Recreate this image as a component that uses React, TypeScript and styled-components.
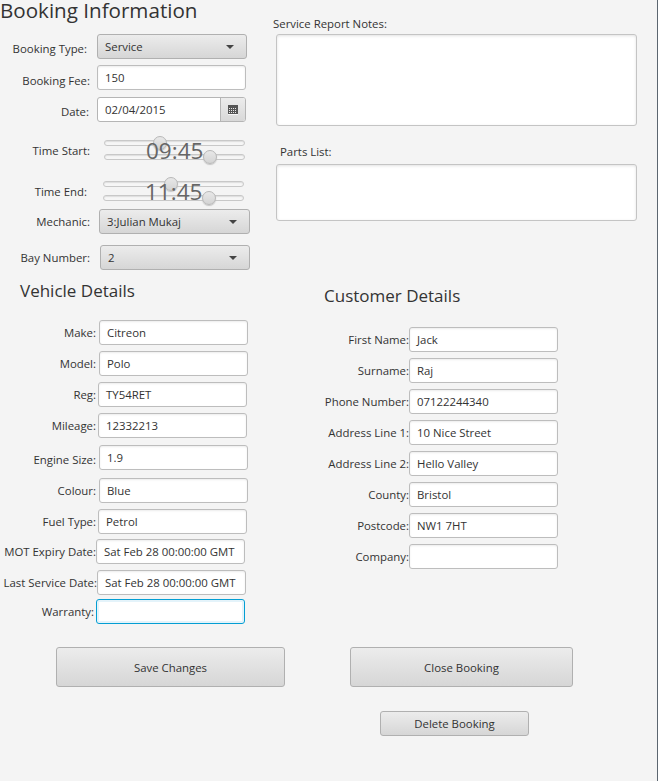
import { createGlobalStyle } from "styled-components";
import styled from "styled-components";

const GlobalStyle = createGlobalStyle`
  html, body {
    margin: 0;
    padding: 0;
    background: #f4f4f4;
  }
  body {
    font-family: "Open Sans", "Noto Sans", sans-serif;
    color: #333;
  }
`;

const Page = styled.div`
  width: 658px;
  height: 781px;
  box-sizing: border-box;
  border-right: 1px solid #5c6670;
  background: #f4f4f4;
  overflow: hidden;
`;

const Columns = styled.div`
  display: flex;
  height: 647px;
`;

const LeftColumn = styled.div`
  width: 273px;
  flex: none;
`;

const RightColumn = styled.div`
  flex: 1;
`;

const MainTitle = styled.h1`
  margin: 0;
  height: 20px;
  line-height: 20px;
  font-size: 20.6px;
  font-weight: 400;
  color: #333;
`;

const SectionTitle = styled.h2<{ $top: number; $left: number }>`
  margin: ${(p) => p.$top}px 0 0 ${(p) => p.$left}px;
  height: 24px;
  line-height: 24px;
  font-size: 17px;
  font-weight: 400;
  color: #333;
`;

const Row = styled.div<{ $top: number }>`
  display: flex;
  align-items: center;
  height: 25px;
  margin-top: ${(p) => p.$top}px;
`;

const Label = styled.label<{ $width: number; $gap: number; $drop?: number }>`
  width: ${(p) => p.$width}px;
  margin-right: ${(p) => p.$gap}px;
  padding-top: ${(p) => (p.$drop ?? 0) * 2}px;
  flex: none;
  text-align: right;
  font-size: 11.4px;
  white-space: nowrap;
  color: #333;
`;

const Input = styled.div<{ $width: number; $focused?: boolean }>`
  width: ${(p) => p.$width}px;
  height: 25px;
  box-sizing: border-box;
  padding: 0 7px;
  line-height: 23px;
  font-size: 11.4px;
  white-space: nowrap;
  overflow: hidden;
  background: #fff;
  border: 1px solid ${(p) => (p.$focused ? "#039ed3" : "#bdbdbd")};
  border-radius: 3px;
  box-shadow: ${(p) =>
    p.$focused ? "inset 0 0 0 2px #e4f3fa" : "inset 0 1px 2px #ececec"};
  color: #333;
`;

const Select = styled.div<{ $width: number }>`
  width: ${(p) => p.$width}px;
  height: 25px;
  box-sizing: border-box;
  padding: 0 12px 0 7px;
  display: flex;
  align-items: center;
  justify-content: space-between;
  font-size: 11.4px;
  background: linear-gradient(#ececec, #d6d6d6);
  border: 1px solid #b0b0b0;
  border-radius: 3px;
  color: #333;
`;

const Arrow = styled.span`
  width: 0;
  height: 0;
  border-left: 4px solid transparent;
  border-right: 4px solid transparent;
  border-top: 4px solid #444;
`;

const DateField = styled.div`
  width: 149px;
  height: 25px;
  box-sizing: border-box;
  display: flex;
  background: #fff;
  border: 1px solid #b5b5b5;
  border-radius: 3px;
  overflow: hidden;
  font-size: 11.4px;
  line-height: 23px;
`;

const DateText = styled.span`
  flex: 1;
  padding: 0 7px;
`;

const DateButton = styled.span`
  width: 24px;
  display: flex;
  align-items: center;
  justify-content: center;
  background: linear-gradient(#ececec, #d8d8d8);
  border-left: 1px solid #b5b5b5;
`;

const TimeRow = styled.div<{ $top: number }>`
  display: flex;
  align-items: center;
  margin-top: ${(p) => p.$top}px;
`;

const TimeControl = styled.div<{ $left: number }>`
  position: relative;
  width: 141px;
  margin-left: ${(p) => p.$left}px;
  display: flex;
  flex-direction: column;
  gap: 8px;
`;

const Track = styled.div`
  position: relative;
  height: 6px;
  box-sizing: border-box;
  background: #f6f6f6;
  border: 1px solid #c8c8c8;
  border-radius: 3px;
  box-shadow: inset 0 1px 1px #dedede;
`;

const Thumb = styled.span<{ $at: number }>`
  position: absolute;
  top: -5px;
  left: ${(p) => p.$at}px;
  width: 14px;
  height: 14px;
  box-sizing: border-box;
  border-radius: 50%;
  background: linear-gradient(#e8e8e8, #d4d4d4);
  border: 1px solid #b8b8b8;
  box-shadow: 0 1px 1px #c4c4c4;
`;

const Clock = styled.span`
  position: absolute;
  top: -1px;
  left: 42px;
  font-size: 22.5px;
  line-height: 24px;
  color: #666;
`;

const NoteLabel = styled.div<{ $top: number; $left: number }>`
  margin: ${(p) => p.$top}px 0 0 ${(p) => p.$left}px;
  height: 16px;
  line-height: 16px;
  font-size: 11.4px;
  color: #333;
`;

const NoteArea = styled.div<{ $height: number; $top: number }>`
  width: 361px;
  height: ${(p) => p.$height}px;
  margin: ${(p) => p.$top}px 0 0 3px;
  box-sizing: border-box;
  background: #fff;
  border: 1px solid #c4c4c4;
  border-radius: 3px;
  box-shadow: inset 0 1px 3px #e2e2e2;
`;

const CustomerFields = styled.div`
  display: flex;
  flex-direction: column;
  gap: 6px;
  margin-top: 19px;
`;

const ActionButton = styled.button<{ $width: number; $height: number }>`
  width: ${(p) => p.$width}px;
  height: ${(p) => p.$height}px;
  padding: 0;
  font-family: inherit;
  font-size: 11.4px;
  color: #333;
  background: linear-gradient(#ececec, #d6d6d6);
  border: 1px solid #b0b0b0;
  border-radius: 3px;
`;

const ButtonRow = styled.div`
  display: flex;
  align-items: flex-start;
  padding-left: 56px;
  gap: 65px;
`;

const DeleteRow = styled.div`
  padding-left: 380px;
  margin-top: 24px;
`;

const vehicle = [
  { label: "Make:", value: "Citreon", top: 17, width: 96, gap: 3 },
  { label: "Model:", value: "Polo", top: 6, width: 96, gap: 3 },
  { label: "Reg:", value: "TY54RET", top: 6, width: 96, gap: 2 },
  { label: "Mileage:", value: "12332213", top: 6, width: 96, gap: 2 },
  { label: "Engine Size:", value: "1.9", top: 7, width: 96, gap: 3, drop: 2 },
  { label: "Colour:", value: "Blue", top: 8, width: 96, gap: 3 },
  { label: "Fuel Type:", value: "Petrol", top: 6, width: 96, gap: 2 },
  { label: "MOT Expiry Date:", value: "Sat Feb 28 00:00:00 GMT", top: 5, width: 96, gap: 0 },
  { label: "Last Service Date:", value: "Sat Feb 28 00:00:00 GMT", top: 6, width: 97, gap: 0 },
  { label: "Warranty:", value: "", top: 4, width: 94, gap: 2, focused: true },
];

const customer = [
  { label: "First Name:", value: "Jack" },
  { label: "Surname:", value: "Raj" },
  { label: "Phone Number:", value: "07122244340" },
  { label: "Address Line 1:", value: "10 Nice Street" },
  { label: "Address Line 2:", value: "Hello Valley" },
  { label: "County:", value: "Bristol" },
  { label: "Postcode:", value: "NW1 7HT" },
  { label: "Company:", value: "" },
];

function CalendarIcon() {
  return (
    <svg width="10" height="10" viewBox="0 0 10 10">
      <rect x="0" y="0" width="10" height="9" fill="#555" />
      <path
        d="M1 3h1v1H1zM3 3h1v1H3zM5 3h1v1H5zM7 3h1v1H7zM1 5h1v1H1zM3 5h1v1H3zM5 5h1v1H5zM7 5h1v1H7zM1 7h1v1H1zM3 7h1v1H3zM5 7h1v1H5zM7 7h1v1H7z"
        fill="#e8e8e8"
      />
      <rect x="0" y="9" width="10" height="1" fill="#f6f6f6" />
    </svg>
  );
}

function App() {
  return (
    <Page>
      <GlobalStyle />
      <Columns>
        <LeftColumn>
          <MainTitle>Booking Information</MainTitle>
          <Row $top={14}>
            <Label $width={87} $gap={10} $drop={2}>Booking Type:</Label>
            <Select $width={150}>Service<Arrow /></Select>
          </Row>
          <Row $top={6}>
            <Label $width={90} $gap={7} $drop={3}>Booking Fee:</Label>
            <Input $width={149}>150</Input>
          </Row>
          <Row $top={7}>
            <Label $width={89} $gap={8} $drop={2}>Date:</Label>
            <DateField>
              <DateText>02/04/2015</DateText>
              <DateButton><CalendarIcon /></DateButton>
            </DateField>
          </Row>
          <TimeRow $top={18}>
            <Label $width={90} $gap={0}>Time Start:</Label>
            <TimeControl $left={14}>
              <Track><Thumb $at={48} /></Track>
              <Track><Thumb $at={98} /></Track>
              <Clock>09:45</Clock>
            </TimeControl>
          </TimeRow>
          <TimeRow $top={21}>
            <Label $width={87} $gap={0}>Time End:</Label>
            <TimeControl $left={16}>
              <Track><Thumb $at={60} /></Track>
              <Track><Thumb $at={98} /></Track>
              <Clock>11:45</Clock>
            </TimeControl>
          </TimeRow>
          <Row $top={8}>
            <Label $width={90} $gap={9}>Mechanic:</Label>
            <Select $width={151}>3:Julian Mukaj<Arrow /></Select>
          </Row>
          <Row $top={11}>
            <Label $width={90} $gap={10}>Bay Number:</Label>
            <Select $width={150}>2<Arrow /></Select>
          </Row>
          <SectionTitle $top={9} $left={20}>Vehicle Details</SectionTitle>
          {vehicle.map((f) => (
            <Row key={f.label} $top={f.top}>
              <Label $width={f.width} $gap={f.gap} $drop={f.drop}>{f.label}</Label>
              <Input $width={149} $focused={f.focused}>{f.value}</Input>
            </Row>
          ))}
        </LeftColumn>
        <RightColumn>
          <NoteLabel $top={16} $left={0}>Service Report Notes:</NoteLabel>
          <NoteArea $height={92} $top={2} />
          <NoteLabel $top={18} $left={7}>Parts List:</NoteLabel>
          <NoteArea $height={57} $top={4} />
          <SectionTitle $top={63} $left={51}>Customer Details</SectionTitle>
          <CustomerFields>
            {customer.map((f) => (
              <Row key={f.label} $top={0}>
                <Label $width={136} $gap={0}>{f.label}</Label>
                <Input $width={149}>{f.value}</Input>
              </Row>
            ))}
          </CustomerFields>
        </RightColumn>
      </Columns>
      <ButtonRow>
        <ActionButton $width={229} $height={40}>Save Changes</ActionButton>
        <ActionButton $width={223} $height={40}>Close Booking</ActionButton>
      </ButtonRow>
      <DeleteRow>
        <ActionButton $width={149} $height={25}>Delete Booking</ActionButton>
      </DeleteRow>
    </Page>
  );
}

export default App;
